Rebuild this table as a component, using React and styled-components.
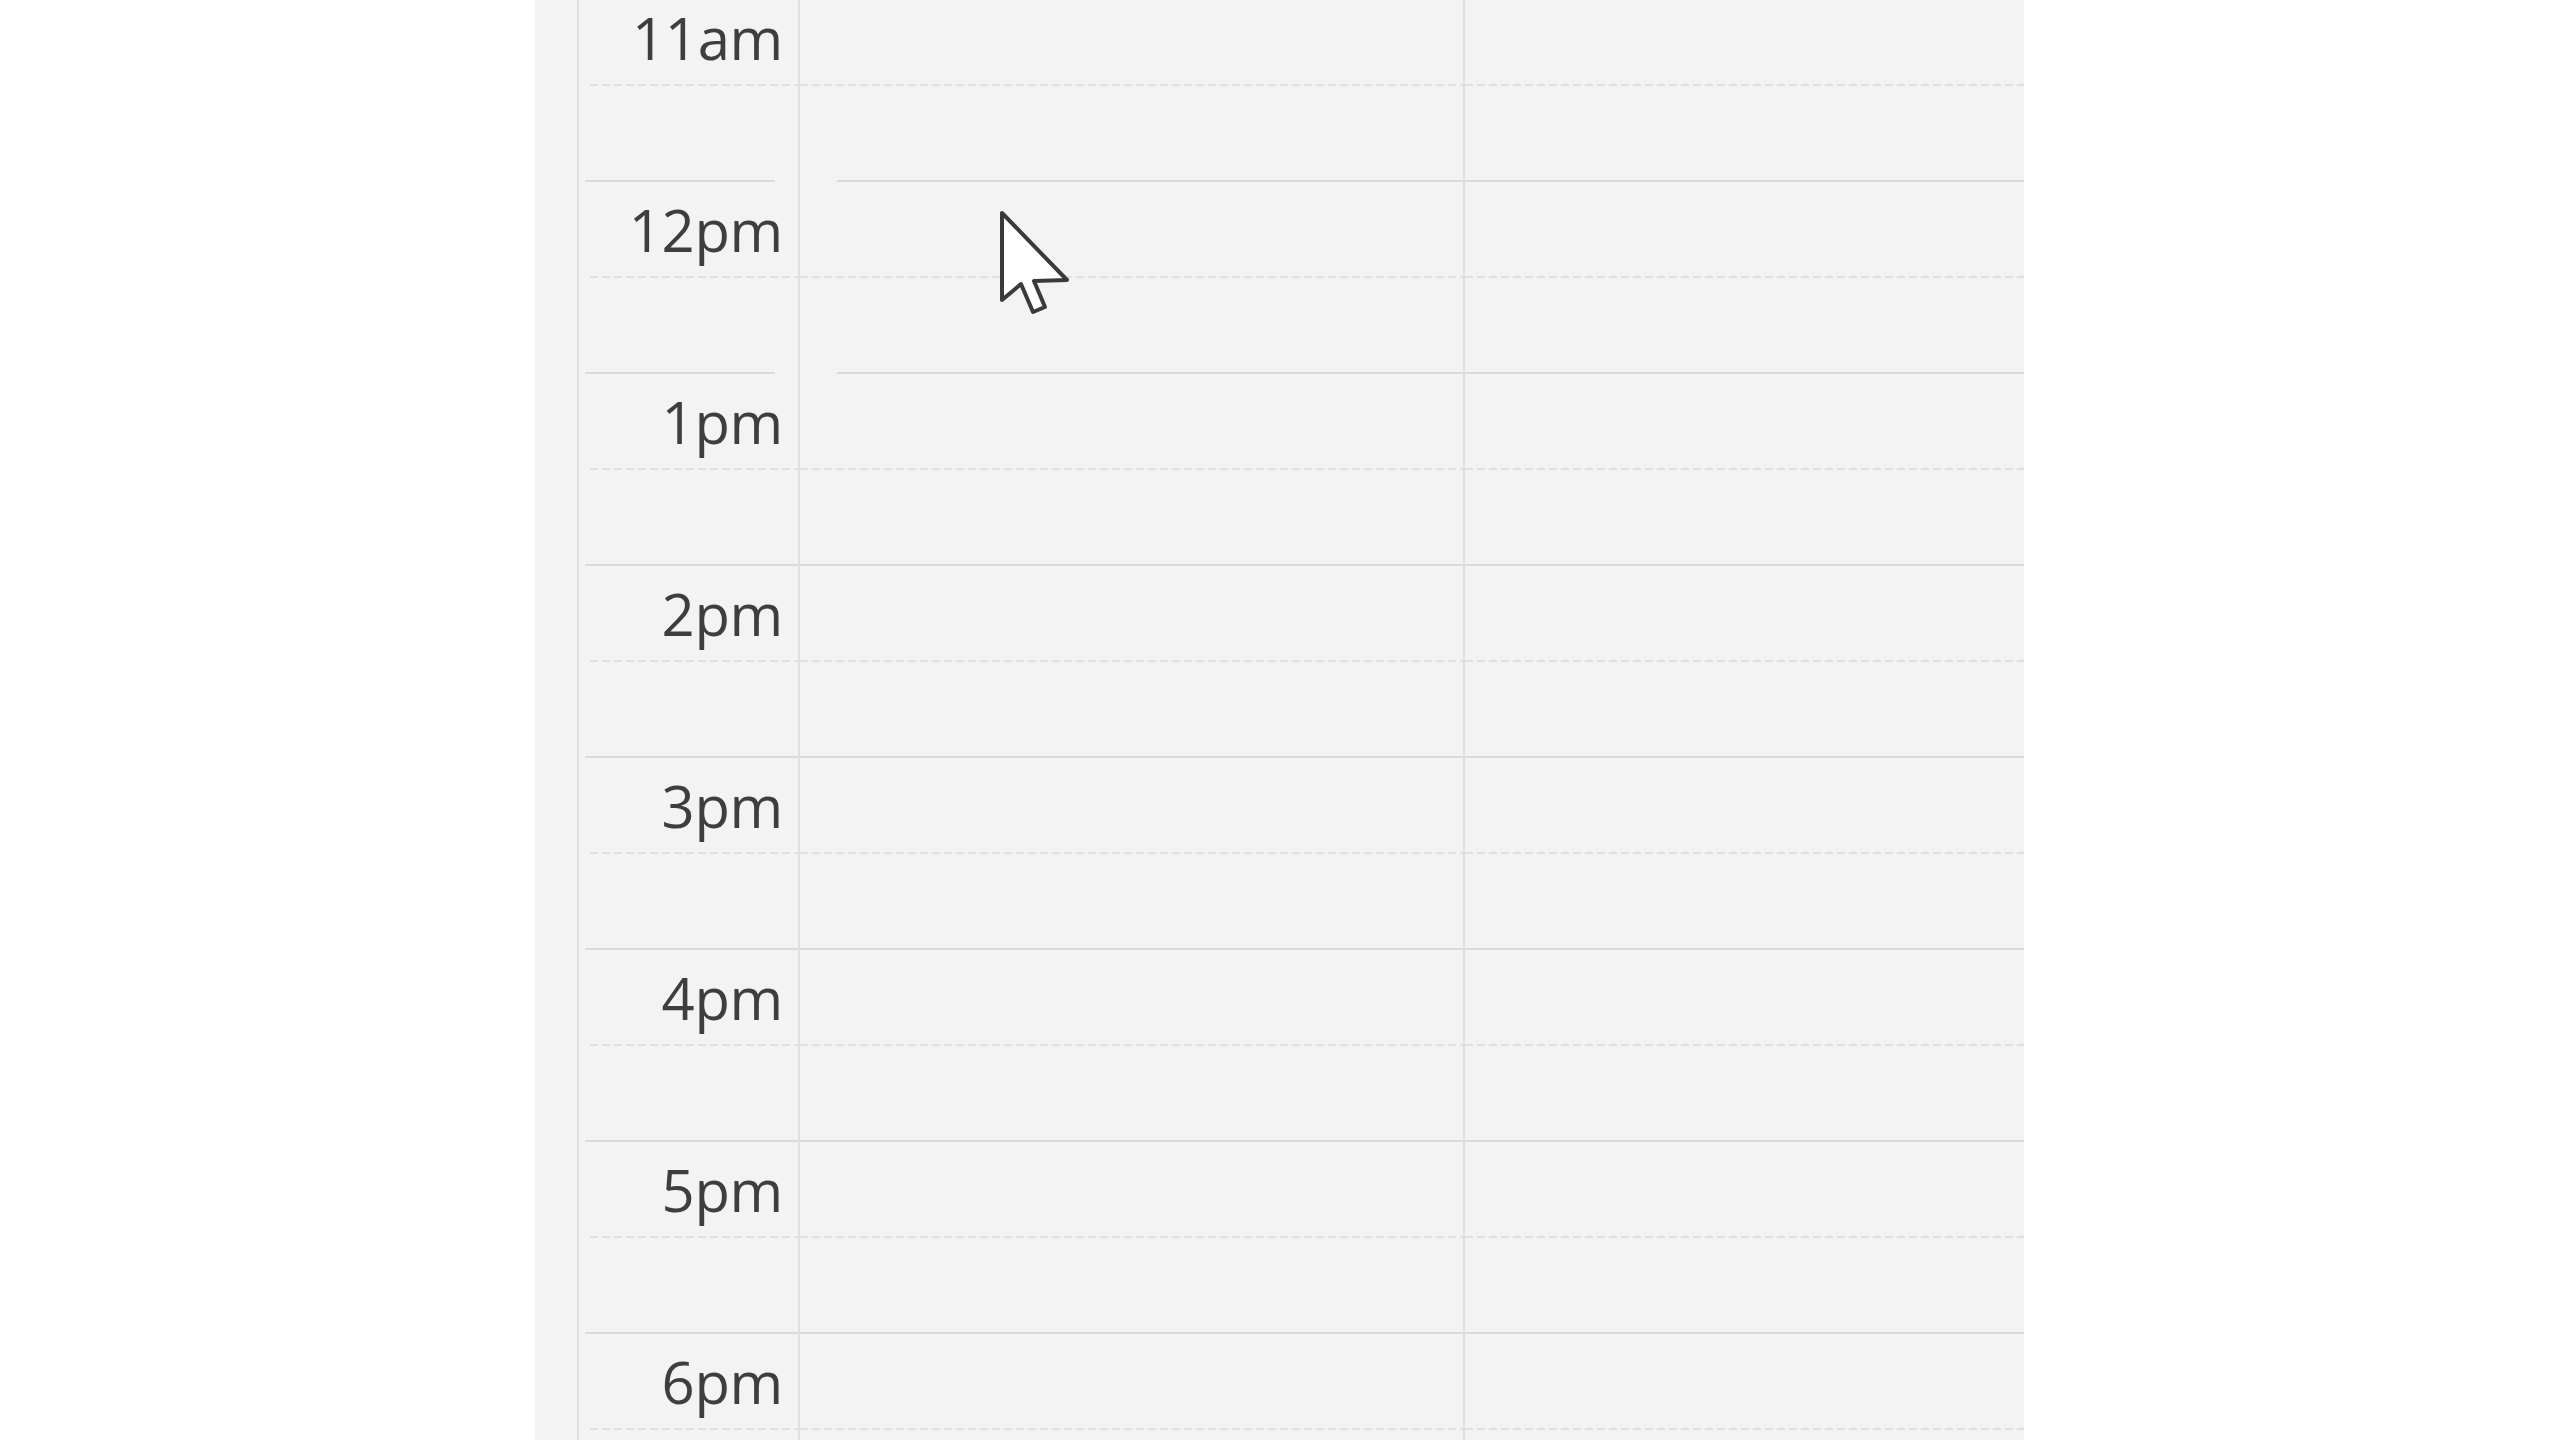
import styled, { createGlobalStyle } from "styled-components";

const GlobalStyle = createGlobalStyle`
  *, *::before, *::after {
    box-sizing: border-box;
  }
  html, body {
    margin: 0;
    padding: 0;
    background: #ffffff;
  }
  body {
    font-family: "Open Sans", "Noto Sans", sans-serif;
  }
`;

const Page = styled.div`
  position: relative;
  width: 2560px;
  height: 1440px;
  overflow: hidden;
  background: #ffffff;
  display: flex;
`;

const Panel = styled.div`
  margin-left: 535px;
  width: 1489px;
  height: 100%;
  background: #f3f3f3;
  overflow: hidden;
`;

const Grid = styled.div`
  margin-top: -10px;
  display: flex;
  flex-direction: column;
`;

const Row = styled.div`
  display: flex;
  height: 192px;
`;

const Gutter = styled.div`
  width: 44px;
  flex-shrink: 0;
  border-right: 2px solid #e0e0e0;
`;

const Cell = styled.div`
  display: flex;
  flex-direction: column;
  width: ${(p) => (p.$width ? `${p.$width}px` : "auto")};
  flex: ${(p) => (p.$width ? "0 0 auto" : "1 1 auto")};
  border-right: ${(p) => (p.$last ? "none" : "2px solid #e0e0e0")};
`;

const Half = styled.div`
  height: 94px;
  display: flex;
  justify-content: flex-end;
  align-items: flex-start;
`;

const Label = styled.div`
  margin-top: 19px;
  padding-right: 15px;
  font-family: "Open Sans", "Noto Sans", sans-serif;
  font-size: 58px;
  line-height: 58px;
  color: #3e3e3e;
  letter-spacing: -0.3px;
`;

const DashLine = styled.div`
  height: 2px;
  margin-left: ${(p) => p.$inset || 0}px;
  background-image: repeating-linear-gradient(
    to right,
    #e0e0e0 0 8px,
    transparent 8px 12px
  );
`;

const HourLine = styled.div`
  height: 2px;
  margin-left: ${(p) => p.$left || 0}px;
  margin-right: ${(p) => p.$right || 0}px;
  background: #dadada;
`;

const CursorWrap = styled.div`
  position: absolute;
  left: 999px;
  top: 210px;
  width: 72px;
  height: 106px;
  pointer-events: none;
`;

const hours = ["11am", "12pm", "1pm", "2pm", "3pm", "4pm", "5pm", "6pm"];

const Cursor = () => (
  <CursorWrap>
    <svg width="72" height="106" viewBox="-3 -3 72 106">
      <path
        d="M0 0 L0 87 L19 71 L31 99 L43 94 L32 68 L65 67 Z"
        fill="#ffffff"
        stroke="#3a3a3a"
        strokeWidth="4"
        strokeLinejoin="round"
      />
    </svg>
  </CursorWrap>
);

const App = () => {
  return (
    <Page>
      <GlobalStyle />
      <Panel>
        <Grid>
          {hours.map((h, i) => {
            const faded = i < 2;
            return (
              <Row key={h}>
                <Gutter />
                <Cell $width={221}>
                  <Half>
                    <Label>{h}</Label>
                  </Half>
                  <DashLine $inset={11} />
                  <Half />
                  <HourLine $left={6} $right={faded ? 23 : 0} />
                </Cell>
                <Cell $width={665}>
                  <Half />
                  <DashLine />
                  <Half />
                  <HourLine $left={faded ? 37 : 0} />
                </Cell>
                <Cell $last>
                  <Half />
                  <DashLine />
                  <Half />
                  <HourLine />
                </Cell>
              </Row>
            );
          })}
        </Grid>
      </Panel>
      <Cursor />
    </Page>
  );
};

export default App;
